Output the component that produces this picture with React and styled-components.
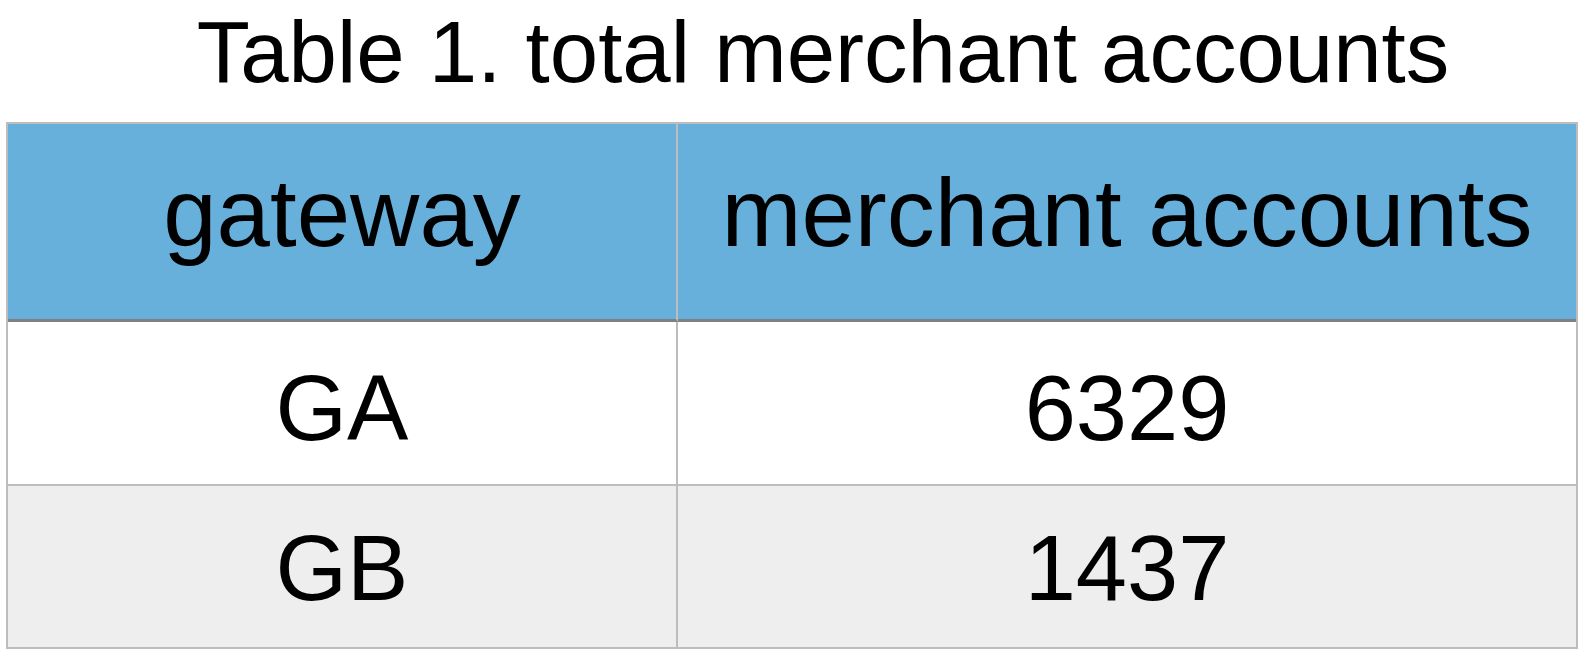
import React from 'react';
import styled, { createGlobalStyle } from 'styled-components';

const GlobalStyle = createGlobalStyle`
  body {
    margin: 0;
    background: #ffffff;
    font-family: "Liberation Sans", Arial, Helvetica, sans-serif;
    color: #000000;
  }
`;

const Page = styled.div`
  padding: 8px 12px 0 6px;
  width: 1572px;
`;

const Caption = styled.div`
  font-size: 87px;
  line-height: 88px;
  height: 88px;
  padding-left: 62px;
  text-align: center;
  margin-bottom: 26px;
  white-space: nowrap;
`;

const Grid = styled.div`
  display: grid;
  grid-template-columns: 670px 1fr;
  border: 2px solid #bdbdbd;
`;

const Cell = styled.div`
  height: ${props => props.h}px;
  padding-top: ${props => props.pt}px;
  box-sizing: border-box;
  text-align: center;
  font-size: ${props => (props.head ? 96 : 92)}px;
  line-height: 1;
  white-space: nowrap;
  background: ${props => props.bg};
  border-right: ${props => (props.first ? '2px solid #bdbdbd' : 'none')};
  border-bottom: ${props => props.bottom || 'none'};
`;

const rows = [
  { label: 'GA', value: '6329', bg: '#ffffff', h: 164, pt: 40, bottom: '2px solid #bdbdbd' },
  { label: 'GB', value: '1437', bg: '#eeeeee', h: 161, pt: 36 },
];

const App = () => {
  return (
    <>
      <GlobalStyle />
      <Page>
        <Caption>Table 1. total merchant accounts</Caption>
        <Grid>
          <Cell head first h={198} pt={41} bg="#67b0dc" bottom="3px solid #808080">
            gateway
          </Cell>
          <Cell head h={198} pt={41} bg="#67b0dc" bottom="3px solid #808080">
            merchant accounts
          </Cell>
          {rows.map(r => (
            <React.Fragment key={r.label}>
              <Cell first h={r.h} pt={r.pt} bg={r.bg} bottom={r.bottom}>
                {r.label}
              </Cell>
              <Cell h={r.h} pt={r.pt} bg={r.bg} bottom={r.bottom}>
                {r.value}
              </Cell>
            </React.Fragment>
          ))}
        </Grid>
      </Page>
    </>
  );
};

export default App;
